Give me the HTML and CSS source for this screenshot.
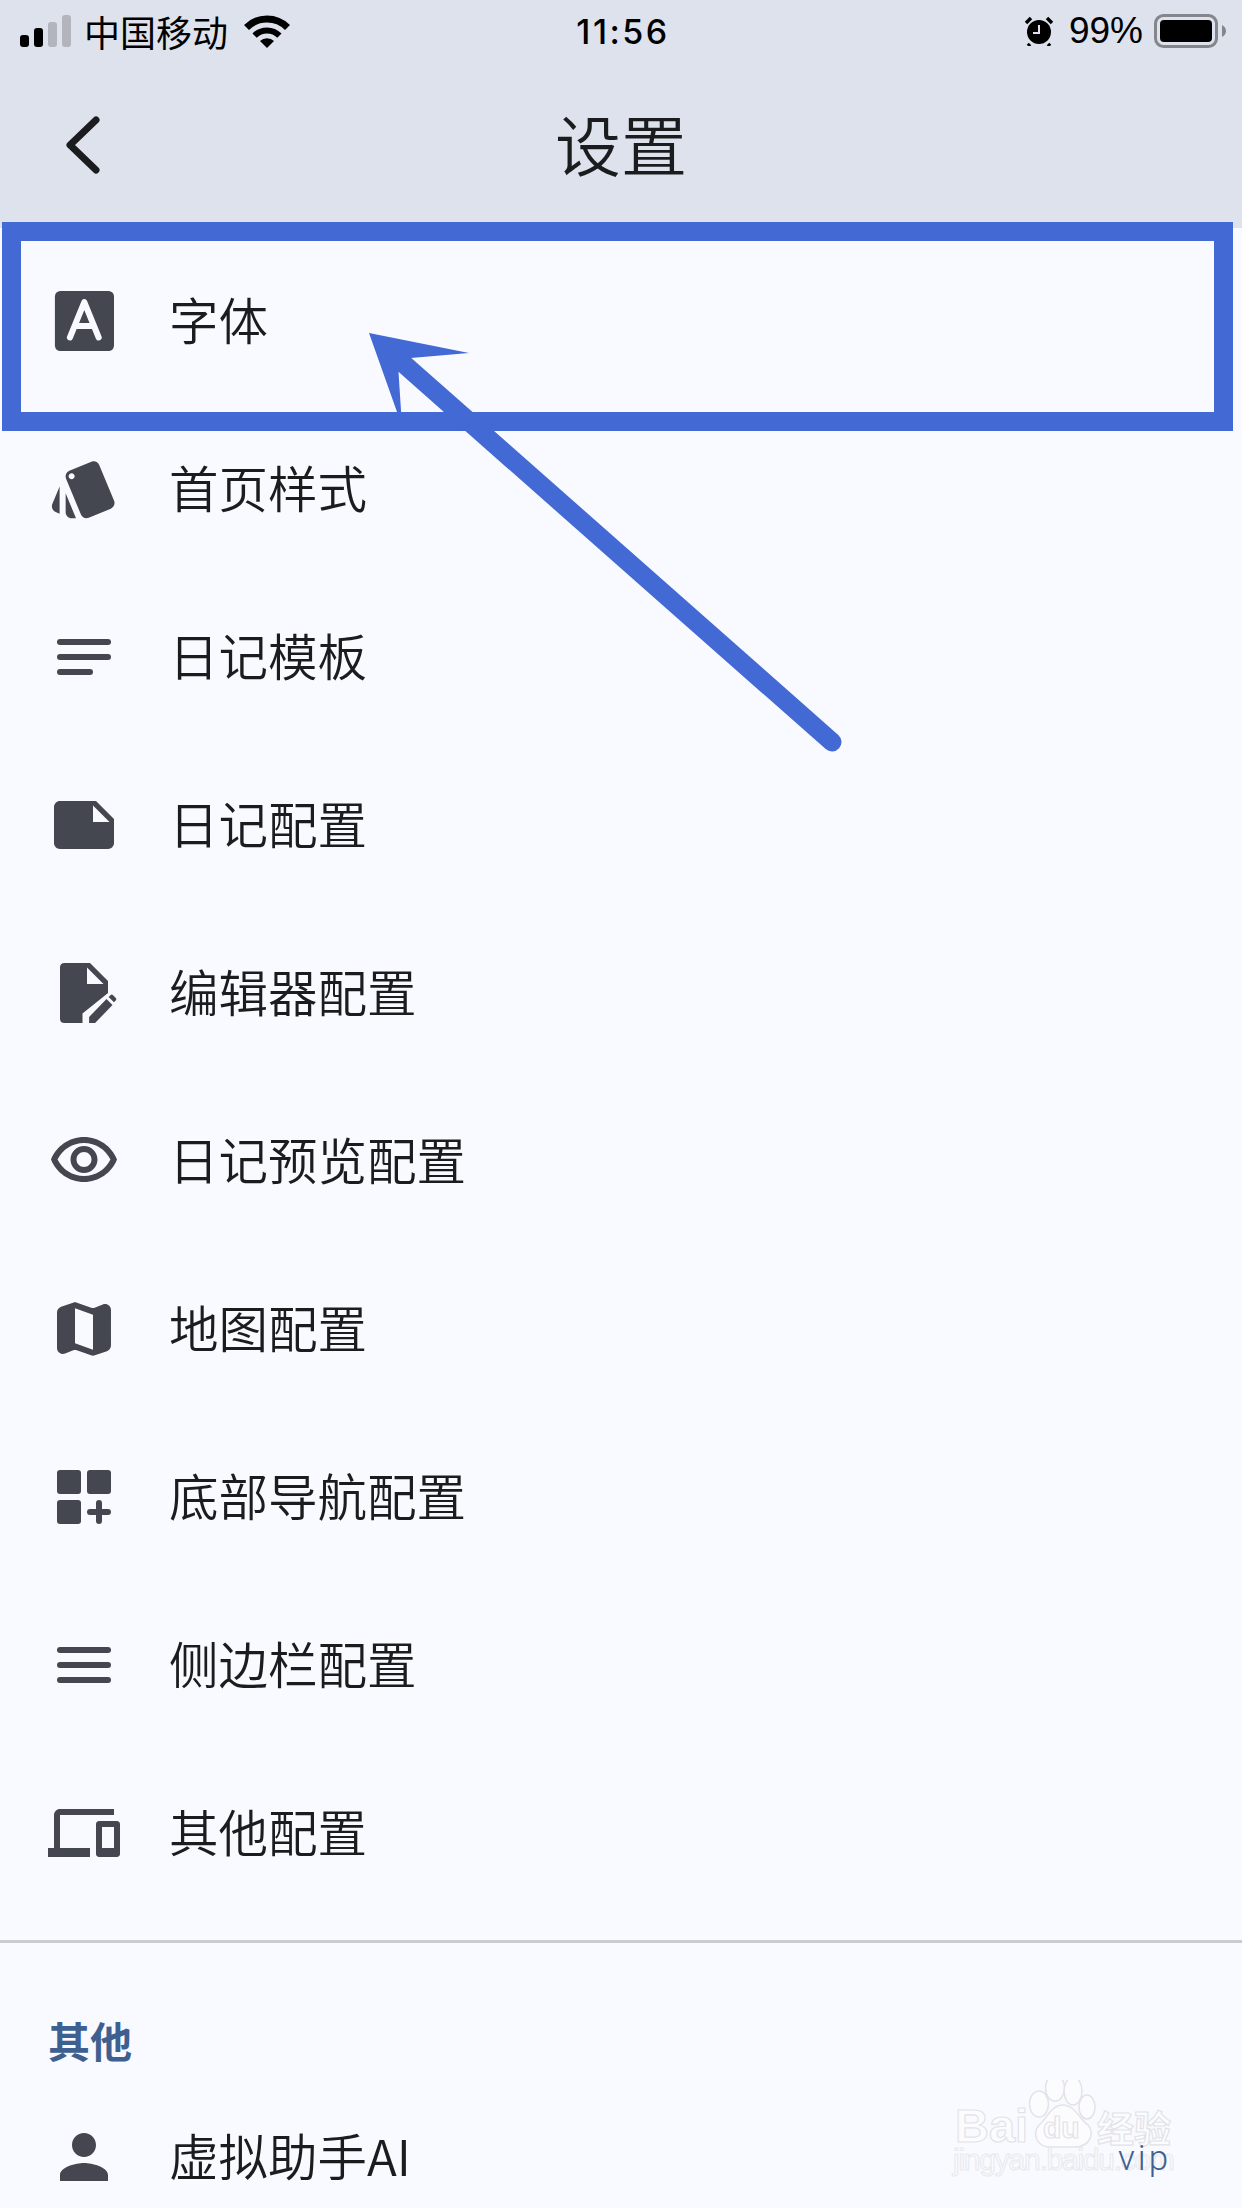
FILE: index.html
```html
<!DOCTYPE html>
<html lang="zh-CN">

<head>
    <meta charset="UTF-8">
    <meta name="viewport" content="width=device-width, initial-scale=1.0">
    <title>设置</title>
    <link rel="stylesheet" href="styles.css">
</head>

<body>
    <div class="page">
        <div class="status">
            <div class="status-left">
                <div class="signal">
                    <span class="bar bar1"></span>
                    <span class="bar bar2"></span>
                    <span class="bar bar3"></span>
                    <span class="bar bar4"></span>
                </div>
                <span class="carrier">中国移动</span>
                <svg class="wifi" viewBox="0 0 46 33">
                    <path d="M2.5 12.5A29 29 0 0 1 43.500 12.500" fill="none" stroke="#000" stroke-width="7" />
                    <path d="M10.600 20.600A17.500 17.500 0 0 1 35.400 20.600" fill="none" stroke="#000" stroke-width="6" />
                    <path d="M23 33L16 26A10 10 0 0 1 30 26Z" />
                </svg>
            </div>
            <div class="time">11:56</div>
            <div class="status-right">
                <svg class="alarm" viewBox="0 0 28 30">
                    <circle cx="14" cy="16" r="12" />
                    <path d="M1 7L6 2M27 7L22 2M5 28L3 30M23 28L25 30" stroke="#000" stroke-width="3.500" />
                    <path d="M14 9V17H8" fill="none" stroke="#dee2ec" stroke-width="2" />
                </svg>
                <span class="percent">99%</span>
                <svg class="battery" viewBox="0 0 72 34">
                    <rect x="1.500" y="1.500" width="61" height="31" rx="8" fill="none" stroke="#85868c" stroke-width="3" />
                    <rect x="6" y="6" width="52" height="22" rx="4" />
                    <path d="M68 11C70 12 72 14 72 17C72 20 70 22 68 23Z" fill="#85868c" />
                </svg>
            </div>
        </div>

        <div class="topbar">
            <svg class="back" viewBox="0 0 36 60">
                <path d="M31 5L5 30L31 55" fill="none" stroke="#1a1c1e" stroke-width="7" stroke-linecap="round" stroke-linejoin="round" />
            </svg>
            <h1 class="title">设置</h1>
        </div>

        <div class="list">
            <div class="row">
                <svg class="icon" viewBox="0 0 24 24">
                    <rect x="2.300" y="2" width="19.700" height="20" rx="1.800" />
                    <path d="M7.300 17.500L12.100 5.700L16.900 17.500M9.100 13.700H15.100" fill="none" stroke="#f9faff" stroke-width="2" stroke-linecap="round" stroke-linejoin="round" />
                </svg>
                <span class="label">字体</span>
            </div>
            <div class="row">
                <svg class="icon" viewBox="0 0 24 24">
                    <path d="M2.530 19.650l1.340.560v-9.030l-2.430 5.860c-.410 1.020.080 2.190 1.090 2.610zm19.500-3.700L17.070 3.980c-.310-.750-1.040-1.210-1.810-1.230-.260 0-.530.040-.790.150L7.100 5.950c-.750.310-1.210 1.030-1.230 1.800-.010.270.040.540.150.800l4.960 11.970c.310.760 1.050 1.220 1.830 1.230.260 0 .520-.050.770-.150l7.360-3.050c1.020-.420 1.510-1.590 1.090-2.600zM7.880 8.750c-.550 0-1-.450-1-1s.450-1 1-1 1 .450 1 1-.450 1-1 1zm-2 11c0 1.100.9 2 2 2h1.450l-3.450-8.340v6.340z" />
                </svg>
                <span class="label">首页样式</span>
            </div>
            <div class="row">
                <svg class="icon" viewBox="0 0 24 24">
                    <rect x="3" y="6" width="18" height="2" rx="1" />
                    <rect x="3" y="11" width="18" height="2" rx="1" />
                    <rect x="3" y="16" width="12" height="2" rx="1" />
                </svg>
                <span class="label">日记模板</span>
            </div>
            <div class="row">
                <svg class="icon" viewBox="0 0 24 24">
                    <path d="M22 10l-6-6H4c-1.100 0-2 .9-2 2v12.010c0 1.100.9 1.990 2 1.990l16-.010c1.100 0 2-.890 2-1.990v-8zm-7-4.500l5.500 5.500H15V5.500z" />
                </svg>
                <span class="label">日记配置</span>
            </div>
            <div class="row">
                <svg class="icon" viewBox="0 0 24 24">
                    <path d="M5.500 2H14L20 8V12L11.500 18.800V22H5.500C4.500 22 4 21.500 4 20.500V3.500C4 2.500 4.500 2 5.500 2ZM13 3.500V9H18.500Z" fill-rule="evenodd" />
                    <path d="M13.700 22V20L19.500 14L21.500 16L15.700 22Z" />
                    <path d="M20.200 13.300L21 12.600Q21.300 12.400 21.600 12.700L22.600 13.700Q22.900 14 22.700 14.300L22 15.100Z" />
                </svg>
                <span class="label">编辑器配置</span>
            </div>
            <div class="row">
                <svg class="icon" viewBox="0 0 24 24">
                    <path d="M12 6c3.790 0 7.170 2.130 8.820 5.500C19.170 14.870 15.790 17 12 17s-7.170-2.130-8.820-5.500C4.830 8.130 8.210 6 12 6m0-2C7 4 2.730 7.110 1 11.500 2.730 15.890 7 19 12 19s9.270-3.110 11-7.500C21.270 7.110 17 4 12 4zm0 5c1.380 0 2.500 1.120 2.500 2.500S13.380 14 12 14s-2.500-1.120-2.500-2.500S10.620 9 12 9m0-2c-2.480 0-4.500 2.020-4.500 4.500S9.520 16 12 16s4.500-2.020 4.500-4.500S14.480 7 12 7z" />
                </svg>
                <span class="label">日记预览配置</span>
            </div>
            <div class="row">
                <svg class="icon" viewBox="0 0 24 24">
                    <path d="M14.650 4.980l-5-1.750c-.420-.150-.880-.150-1.300-.010L4.360 4.560C3.550 4.840 3 5.600 3 6.460v11.850c0 1.410 1.410 2.370 2.720 1.860l2.930-1.140c.220-.090.470-.090.690-.010l5 1.750c.420.150.880.150 1.300.010l3.990-1.340c.810-.270 1.360-1.040 1.360-1.900V5.690c0-1.410-1.410-2.370-2.720-1.860l-2.930 1.140c-.220.080-.460.090-.690.010zM15 18.890l-6-2.110V5.110l6 2.110v11.670z" />
                </svg>
                <span class="label">地图配置</span>
            </div>
            <div class="row">
                <svg class="icon" viewBox="0 0 24 24">
                    <rect x="3" y="3" width="8" height="8" rx="1" />
                    <rect x="13" y="3" width="8" height="8" rx="1" />
                    <rect x="3" y="13" width="8" height="8" rx="1" />
                    <path d="M14 17H20M17 14V20" fill="none" stroke="#44474f" stroke-width="2" stroke-linecap="round" />
                </svg>
                <span class="label">底部导航配置</span>
            </div>
            <div class="row">
                <svg class="icon" viewBox="0 0 24 24">
                    <rect x="3" y="6" width="18" height="2" rx="1" />
                    <rect x="3" y="11" width="18" height="2" rx="1" />
                    <rect x="3" y="16" width="18" height="2" rx="1" />
                </svg>
                <span class="label">侧边栏配置</span>
            </div>
            <div class="row">
                <svg class="icon" viewBox="0 0 24 24">
                    <path d="M4 6h18V4H4c-1.100 0-2 .9-2 2v11H0v3h14v-3H4V6zm19 2h-6c-.550 0-1 .450-1 1v10c0 .550.450 1 1 1h6c.550 0 1-.450 1-1V9c0-.550-.450-1-1-1zm-1 9h-4v-7h4v7z" />
                </svg>
                <span class="label">其他配置</span>
            </div>
        </div>

        <div class="divider"></div>
        <div class="section">其他</div>

        <div class="row">
            <svg class="icon" viewBox="0 0 24 24">
                <path d="M12 12c2.210 0 4-1.790 4-4s-1.790-4-4-4-4 1.790-4 4 1.790 4 4 4zm0 2c-2.670 0-8 1.340-8 4v2h16v-2c0-2.660-5.330-4-8-4z" />
            </svg>
            <span class="label">虚拟助手AI</span>
        </div>

        <!-- annotation drawn over the screenshot -->
        <div class="frame"></div>
        <svg class="arrow" viewBox="0 0 1242 800">
            <path d="M369 333L469 353L411 358L398.500 372L402 426Z" fill="#4369d4" />
            <path d="M405 365L832 742" fill="none" stroke="#4369d4" stroke-width="19" stroke-linecap="round" />
        </svg>

        <svg class="mark" viewBox="950 2080 230 105">
            <g class="mark-shape">
                <ellipse cx="1039" cy="2104" rx="9.500" ry="13" />
                <ellipse cx="1055" cy="2088" rx="9.500" ry="13" />
                <ellipse cx="1073" cy="2091" rx="9" ry="14" />
                <ellipse cx="1087" cy="2107" rx="8" ry="12" />
                <path d="M1063 2105C1075 2105 1080 2120 1088 2125C1096 2135 1088 2147 1075 2147H1050C1038 2147 1031 2135 1039 2125C1046 2120 1051 2105 1063 2105Z" />
            </g>
            <text class="mark-text bai" x="955" y="2142">Bai</text>
            <text class="mark-text du" x="1043" y="2138">du</text>
            <text class="mark-text jing" x="1097" y="2143">经验</text>
            <text class="mark-text url" x="953" y="2170" textLength="222">jingyan.baidu.com</text>
        </svg>
        <span class="vip">vip</span>
    </div>
</body>

</html>
```

FILE: styles.css
```css
* {
    box-sizing: border-box;
}

body {
    margin: 0;
    padding: 0;
    background-color: #f9faff;
}

.page {
    position: relative;
    width: 1242px;
    height: 2208px;
    overflow: hidden;
    background-color: #f9faff;
    color: #1a1c1e;
    font-family: "Noto Sans CJK SC", "Noto Sans", sans-serif;
}

/* status bar */

.status {
    height: 62px;
    padding: 0 16px 0 20px;
    display: grid;
    grid-template-columns: 1fr auto 1fr;
    align-items: center;
    background-color: #dee2ec;
    color: #000;
}

.status-left {
    display: flex;
    align-items: center;
}

.status-right {
    display: flex;
    align-items: center;
    justify-content: flex-end;
}

.signal {
    width: 51px;
    height: 32px;
    display: flex;
    align-items: flex-end;
    justify-content: space-between;
}

.bar {
    width: 9px;
    border-radius: 3px;
    background-color: #b2b5bd;
}

.bar1 {
    height: 12px;
    background-color: #000;
}

.bar2 {
    height: 19px;
    background-color: #000;
}

.bar3 {
    height: 25px;
}

.bar4 {
    height: 32px;
}

.carrier {
    margin-left: 13px;
    font-size: 36px;
    line-height: 48px;
}

.wifi {
    width: 46px;
    height: 33px;
    margin-left: 16px;
}

.time {
    font-family: Inter, "Liberation Sans", sans-serif;
    font-size: 34px;
    font-weight: 500;
    letter-spacing: 2.500px;
}

.alarm {
    width: 28px;
    height: 30px;
}

.percent {
    margin-left: 16px;
    font-family: "Liberation Sans", sans-serif;
    font-size: 37px;
}

.battery {
    width: 72px;
    height: 34px;
    margin-left: 11px;
}

/* header */

.topbar {
    position: relative;
    height: 166px;
    display: flex;
    align-items: center;
    justify-content: center;
    background-color: #dee2ec;
}

.back {
    position: absolute;
    left: 65px;
    top: 53px;
    width: 36px;
    height: 60px;
}

.title {
    margin: 0 0 6px;
    font-size: 66px;
    font-weight: 350;
    line-height: 80px;
}

/* rows */

.list {
    padding-top: 9px;
}

.row {
    height: 168px;
    padding-left: 48px;
    display: flex;
    align-items: center;
}

.icon {
    width: 72px;
    height: 72px;
    flex-shrink: 0;
    fill: #44474f;
}

.label {
    margin-left: 49px;
    margin-bottom: 5px;
    font-size: 49.500px;
    font-weight: 350;
    line-height: 64px;
}

.divider {
    height: 3px;
    margin-top: 23px;
    background-color: #cbccd2;
}

.section {
    padding: 67px 0 0 48px;
    height: 130px;
    color: #3e6090;
    font-size: 42px;
    font-weight: 700;
    line-height: 60px;
}

/* annotation */

.frame {
    position: absolute;
    left: 2px;
    top: 222px;
    width: 1231px;
    height: 209px;
    border: 19px solid #4369d4;
}

.arrow {
    position: absolute;
    left: 0;
    top: 0;
    width: 1242px;
    height: 800px;
}

/* watermark */

.mark {
    position: absolute;
    left: 950px;
    top: 2080px;
    width: 230px;
    height: 105px;
}

.mark-shape {
    fill: #fcfcfe;
    stroke: #e2e3e8;
    stroke-width: 1.500;
}

.mark-text {
    fill: #fcfcfe;
    stroke: #e2e3e8;
    stroke-width: 1.200;
    font-family: "Liberation Sans", sans-serif;
    font-weight: 700;
}

.bai {
    font-size: 47px;
}

.du {
    font-size: 30px;
}

.jing {
    font-family: "Noto Sans CJK SC", sans-serif;
    font-size: 37px;
}

.url {
    font-size: 30px;
    font-weight: 400;
    stroke: #e9eaef;
}

.vip {
    position: absolute;
    left: 1118px;
    top: 2138px;
    color: #3e6090;
    font-family: Roboto, sans-serif;
    font-size: 35px;
    font-weight: 300;
    letter-spacing: 3px;
}
```
